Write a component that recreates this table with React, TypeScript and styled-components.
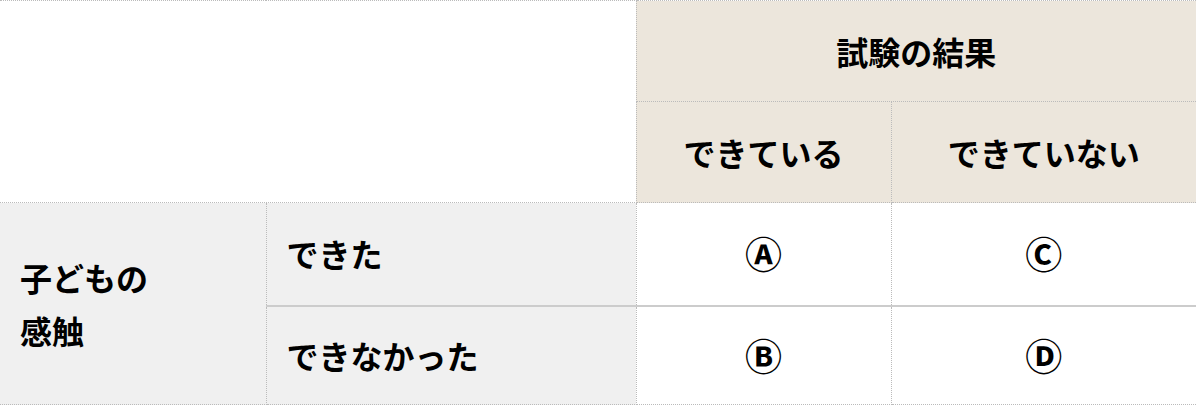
import React from 'react';
import styled, { createGlobalStyle } from 'styled-components';

const GlobalStyle = createGlobalStyle`
  html, body {
    margin: 0;
    padding: 0;
    background: #fff;
  }
  body {
    font-family: "Noto Sans CJK JP", "Noto Sans", sans-serif;
    color: #000;
  }
`;

const Table = styled.table`
  width: 1196px;
  border-collapse: collapse;
  table-layout: fixed;
  font-size: 32px;
  font-weight: 700;
  line-height: 1.65;
  border-top: 1px dotted #bbb;
  border-bottom: 1px dotted #bbb;
`;

const Cell = styled.td<{ $tone?: 'head' | 'side' | 'plain'; $align?: 'left' | 'center'; $h?: number }>`
  height: ${p => p.$h ?? 101}px;
  padding: 0 20px;
  box-sizing: border-box;
  vertical-align: middle;
  text-align: ${p => p.$align ?? 'center'};
  border: 1px dotted #bbb;
  background: ${p =>
    p.$tone === 'head' ? '#ece6dc' : p.$tone === 'side' ? '#f0f0f0' : '#fff'};
  &:first-child {
    border-left: none;
  }
  &:last-child {
    border-right: none;
  }
`;

const Corner = styled(Cell)`
  border-left: none;
`;

const SplitRow = styled.tr`
  & > td {
    border-top: 2px solid #ccc;
  }
`;

const Mark = styled.span`
  display: inline-block;
  font-weight: 700;
  font-size: 37px;
  line-height: 1;
  transform: translateY(2px);
`;

export default function App() {
  return (
    <>
      <GlobalStyle />
      <Table>
        <colgroup>
          <col style={{ width: 266 }} />
          <col style={{ width: 370 }} />
          <col style={{ width: 255 }} />
          <col style={{ width: 305 }} />
        </colgroup>
        <tbody>
          <tr>
            <Corner colSpan={2} rowSpan={2} />
            <Cell colSpan={2} $tone="head">試験の結果</Cell>
          </tr>
          <tr>
            <Cell $tone="head">できている</Cell>
            <Cell $tone="head">できていない</Cell>
          </tr>
          <tr>
            <Cell rowSpan={2} $tone="side" $align="left">
              子どもの
              <br />
              感触
            </Cell>
            <Cell $tone="side" $align="left" $h={103}>できた</Cell>
            <Cell><Mark>Ⓐ</Mark></Cell>
            <Cell><Mark>Ⓒ</Mark></Cell>
          </tr>
          <SplitRow>
            <Cell $tone="side" $align="left" $h={99}>できなかった</Cell>
            <Cell $h={99}><Mark>Ⓑ</Mark></Cell>
            <Cell $h={99}><Mark>Ⓓ</Mark></Cell>
          </SplitRow>
        </tbody>
      </Table>
    </>
  );
}
